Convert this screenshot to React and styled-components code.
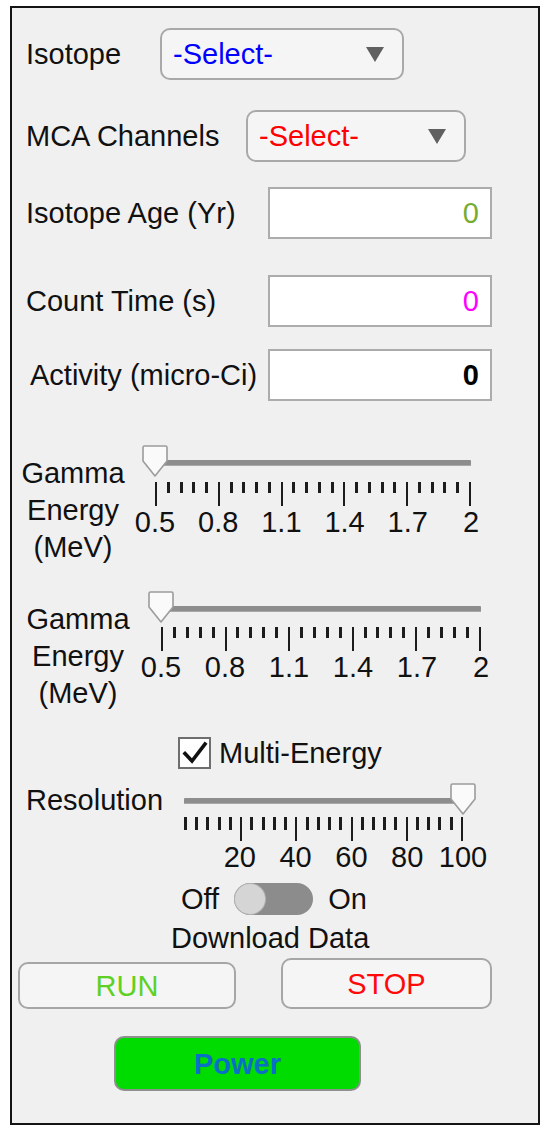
import React from "react";
import styled, { createGlobalStyle } from "styled-components";

const GlobalStyle = createGlobalStyle`
  html, body { margin: 0; padding: 0; background: #ffffff; }
  body { font-family: "Liberation Sans", Arial, sans-serif; }
  #root { width: 550px; height: 1135px; }
`;

const Panel = styled.div`
  box-sizing: border-box;
  margin: 6px 0 0 10px;
  width: 530px;
  height: 1119px;
  border: 2px solid #141414;
  background: #f0f0f0;
  display: flex;
  flex-direction: column;
  font-family: "Liberation Sans", Arial, sans-serif;
  font-size: 29px;
  color: #111111;
`;

const Row = styled.div`
  display: flex;
  flex-shrink: 0;
  align-items: ${(p) => p.$align || "center"};
  margin-top: ${(p) => p.$mt || 0}px;
  padding-left: ${(p) => p.$pl || 0}px;
  height: ${(p) => (p.$h ? `${p.$h}px` : "auto")};
  gap: ${(p) => p.$gap || 0}px;
`;

const Label = styled.span`
  width: ${(p) => (p.$w ? `${p.$w}px` : "auto")};
  flex-shrink: 0;
  white-space: nowrap;
  line-height: 34px;
`;

const Dropdown = styled.div`
  box-sizing: border-box;
  width: ${(p) => p.$w}px;
  height: 52px;
  border: 2px solid #a9a9a9;
  border-radius: 10px;
  background: #f5f5f5;
  display: flex;
  align-items: center;
  justify-content: space-between;
  padding: 0 ${(p) => p.$pr}px 0 ${(p) => p.$pl}px;
  color: ${(p) => p.$color};
  line-height: 34px;
`;

const Caret = styled.svg`
  width: 18px;
  height: 15px;
  flex-shrink: 0;
`;

const Field = styled.div`
  box-sizing: border-box;
  width: 224px;
  height: 52px;
  border: 2px solid #acacac;
  background: #ffffff;
  display: flex;
  align-items: center;
  justify-content: flex-end;
  padding-right: 11px;
  color: ${(p) => p.$color};
  font-weight: ${(p) => (p.$bold ? 700 : 400)};
  line-height: 34px;
`;

const GammaLabel = styled.div`
  width: 110px;
  flex-shrink: 0;
  margin-top: 9.5px;
  line-height: 37px;
  text-align: center;
`;

const SliderBody = styled.div`
  width: ${(p) => p.$len}px;
  flex-shrink: 0;
  display: flex;
  flex-direction: column;
`;

const TrackArea = styled.div`
  position: relative;
  height: ${(p) => p.$h}px;
`;

const Track = styled.div`
  margin-top: 14.5px;
  height: 6px;
  background: #8d8d8d;
  border-radius: 1px;
  box-shadow: inset 0 -1px 0 #a9a9a9;
`;

const Thumb = styled.svg`
  position: absolute;
  top: 0;
  left: ${(p) => p.$x - 13}px;
  width: 26px;
  height: 32px;
`;

const Ticks = styled.div`
  display: flex;
  justify-content: space-between;
  align-items: flex-start;
  height: 24px;
`;

const Tick = styled.div`
  width: ${(p) => (p.$major ? 2 : 3)}px;
  height: ${(p) => (p.$major ? 24 : p.$minorH)}px;
  background: #1c1c1c;
`;

const TickLabels = styled.div`
  display: flex;
  justify-content: space-between;
  height: 32px;
  line-height: 32px;
`;

const TickLabel = styled.div`
  width: 0;
  display: flex;
  justify-content: center;
  white-space: nowrap;
`;

const CheckBox = styled.div`
  box-sizing: border-box;
  width: 33px;
  height: 32px;
  border: 2px solid #6e6e6e;
  background: #ffffff;
  display: flex;
  align-items: center;
  justify-content: center;
`;

const Switch = styled.div`
  box-sizing: border-box;
  width: 79px;
  height: 32px;
  border-radius: 16px;
  background: #8c8c8c;
  padding: 1px;
  display: flex;
`;

const Knob = styled.div`
  width: 30px;
  height: 30px;
  border-radius: 50%;
  background: #d5d5d5;
  box-shadow: 0 0 0 1px #b4b4b4;
`;

const Button = styled.button`
  box-sizing: border-box;
  width: ${(p) => p.$w}px;
  height: ${(p) => p.$h}px;
  border: 2px solid #a6a6a6;
  border-radius: 10px;
  background: #f5f5f5;
  display: flex;
  align-items: center;
  justify-content: center;
  padding: 0;
  font: inherit;
  line-height: 34px;
  color: ${(p) => p.$color};
`;

const PowerButton = styled(Button)`
  background: #00db00;
  border-color: #8f8f8f;
  font-weight: 700;
`;

function Slider({ len, area, value, labels, majorEvery = 5, count = 26, minorH = 11, firstMinor = false }) {
  const ticks = Array.from({ length: count }, (_, i) => {
    const major = i % majorEvery === 0 && !(firstMinor && i === 0);
    return <Tick key={i} $major={major} $minorH={minorH} />;
  });
  return (
    <SliderBody $len={len}>
      <TrackArea $h={area}>
        <Track />
        <Thumb $x={value * len} viewBox="0 0 26 32">
          <path
            d="M2.5 1 H23.5 Q25 1 25 2.5 V16 L13 31 L1 16 V2.5 Q1 1 2.5 1 Z"
            fill="#fafafa"
            stroke="#9c9c9c"
            strokeWidth="1.6"
            strokeLinejoin="round"
          />
        </Thumb>
      </TrackArea>
      <Ticks>{ticks}</Ticks>
      <TickLabels>
        {labels.map((l, i) => (
          <TickLabel key={i}>{l}</TickLabel>
        ))}
      </TickLabels>
    </SliderBody>
  );
}

const caret = (
  <Caret viewBox="0 0 18 15">
    <path d="M0 0 H18 L9 15 Z" fill="#606060" />
  </Caret>
);

const energyLabels = ["0.5", "0.8", "1.1", "1.4", "1.7", "2"];

export default function App() {
  return (
    <>
      <GlobalStyle />
      <Panel>
        <Row $mt={20} $h={52} $pl={14}>
          <Label $w={134}>Isotope</Label>
          <Dropdown $w={244} $pl={11} $pr={18} $color="#0000ff">
            <span>-Select-</span>
            {caret}
          </Dropdown>
        </Row>
        <Row $mt={30} $h={52} $pl={14}>
          <Label $w={220}>MCA Channels</Label>
          <Dropdown $w={220} $pl={11} $pr={18} $color="#ff0000">
            <span>-Select-</span>
            {caret}
          </Dropdown>
        </Row>
        <Row $mt={25} $h={52} $pl={14}>
          <Label $w={242}>Isotope Age (Yr)</Label>
          <Field $color="#77ac30">0</Field>
        </Row>
        <Row $mt={36} $h={52} $pl={14}>
          <Label $w={242}>Count Time (s)</Label>
          <Field $color="#ff00ff">0</Field>
        </Row>
        <Row $mt={22} $h={52} $pl={18}>
          <Label $w={238}>Activity (micro-Ci)</Label>
          <Field $color="#000000" $bold>0</Field>
        </Row>

        <Row $mt={44} $pl={6} $gap={27} $align="flex-start">
          <GammaLabel>
            Gamma
            <br />
            Energy
            <br />
            (MeV)
          </GammaLabel>
          <Slider len={316} area={37} value={0} labels={energyLabels} minorH={11} />
        </Row>

        <Row $mt={25.5} $pl={11} $gap={28} $align="flex-start">
          <GammaLabel>
            Gamma
            <br />
            Energy
            <br />
            (MeV)
          </GammaLabel>
          <Slider len={320} area={36} value={0} labels={energyLabels} minorH={11} />
        </Row>

        <Row $mt={25.5} $h={32} $pl={166} $gap={8}>
          <CheckBox>
            <svg width="26" height="24" viewBox="0 0 26 24">
              <path d="M3 12.5 L10 20 L23 3" fill="none" stroke="#111" strokeWidth="3.6" strokeLinecap="square" />
            </svg>
          </CheckBox>
          <Label>Multi-Energy</Label>
        </Row>

        <Row $mt={14} $pl={14} $align="flex-start">
          <Label $w={158}>Resolution</Label>
          <Slider
            len={279}
            area={34}
            value={1}
            labels={["", "20", "40", "60", "80", "100"]}
            minorH={13}
            firstMinor
          />
        </Row>

        <Row $mt={10} $h={32} $pl={169} $gap={15}>
          <Label>Off</Label>
          <Switch>
            <Knob />
          </Switch>
          <Label>On</Label>
        </Row>

        <Row $mt={6} $pl={159}>
          <Label>Download Data</Label>
        </Row>

        <Row $mt={3} $pl={6} $gap={45} $align="flex-end">
          <Button $w={218} $h={47} $color="#5fd024">
            RUN
          </Button>
          <Button $w={211} $h={51} $color="#ff0a0a">
            STOP
          </Button>
        </Row>

        <Row $mt={27} $pl={102}>
          <PowerButton $w={247} $h={55} $color="#0a6fc6">
            Power
          </PowerButton>
        </Row>
      </Panel>
    </>
  );
}
